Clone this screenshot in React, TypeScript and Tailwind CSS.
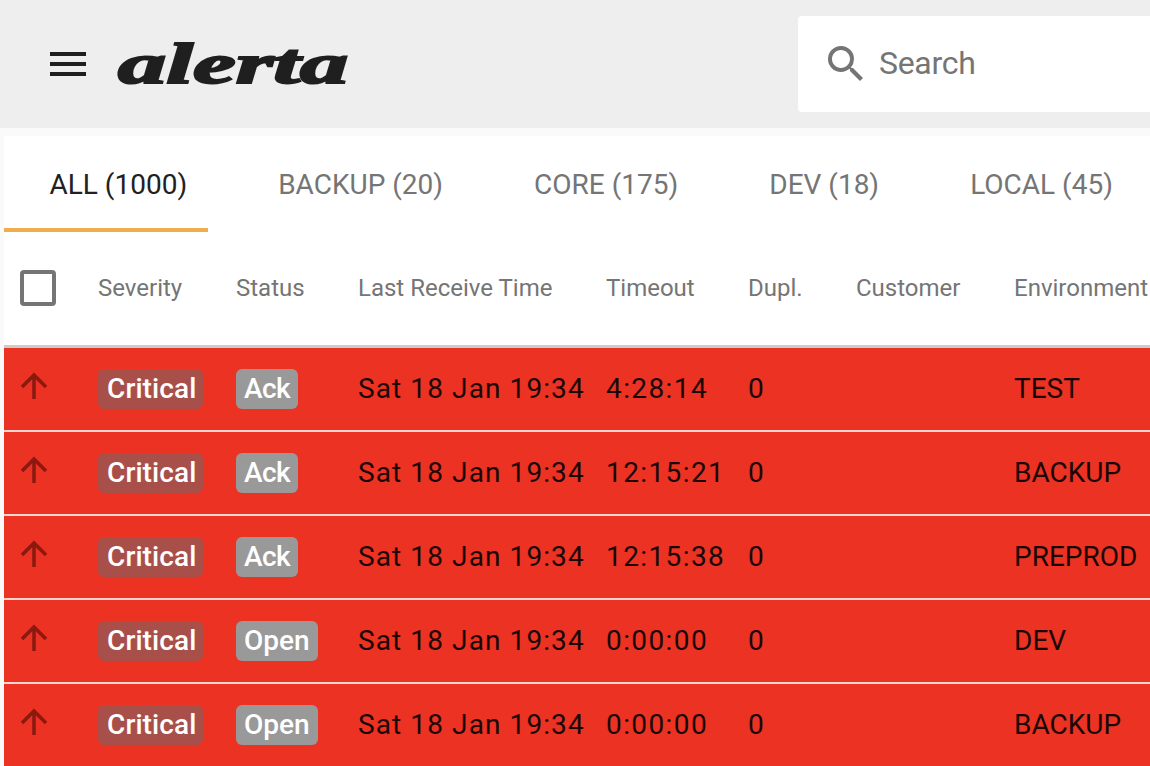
const TABS = ['BACKUP (20)', 'CORE (175)', 'DEV (18)', 'LOCAL (45)'];

const COLUMNS = ['Severity', 'Status', 'Last Receive Time', 'Timeout', 'Dupl.', 'Customer', 'Environment'];

const ALERTS = [
  { status: 'Ack', timeout: '4:28:14', env: 'TEST' },
  { status: 'Ack', timeout: '12:15:21', env: 'BACKUP' },
  { status: 'Ack', timeout: '12:15:38', env: 'PREPROD' },
  { status: 'Open', timeout: '0:00:00', env: 'DEV' },
  { status: 'Open', timeout: '0:00:00', env: 'BACKUP' },
];

const gridCols = 'grid grid-cols-[94px_138px_122px_248px_142px_108px_158px_200px] w-[1210px]';

function ArrowUp() {
  return (
    <svg viewBox="0 0 28 28" className="mb-[6px] h-7 w-7" fill="none" stroke="#8a1a10" strokeWidth="3.5">
      <path d="M14 27V3M2 15L14 3l12 12" />
    </svg>
  );
}

function SearchIcon() {
  return (
    <svg viewBox="0 0 24 24" className="h-12 w-12" fill="#757575">
      <path d="M15.5 14h-.79l-.28-.27A6.471 6.471 0 0 0 16 9.5 6.5 6.5 0 1 0 9.5 16c1.61 0 3.09-.59 4.23-1.57l.27.28v.79l5 4.99L20.49 19l-4.99-5zm-6 0C7.01 14 5 11.99 5 9.5S7.01 5 9.5 5 14 7.01 14 9.5 11.99 14 9.5 14z" />
    </svg>
  );
}

export default function App() {
  return (
    <div className="h-[766px] w-[1150px] overflow-hidden bg-[#fafafa] font-['Roboto',sans-serif]">
      {/* toolbar */}
      <header className="flex h-[128px] items-center bg-[#eeeeee] pl-[50px]">
        <div className="flex w-[36px] flex-col gap-[6px]">
          <span className="h-1 bg-[#1f1f1f]" />
          <span className="h-1 bg-[#1f1f1f]" />
          <span className="h-1 bg-[#1f1f1f]" />
        </div>
        <div className="ml-[32px] w-[230px] origin-left scale-x-[1.72] font-['Liberation_Serif',serif] text-[56px] leading-none font-bold text-[#1f1f1f] italic [-webkit-text-stroke:2px_#1f1f1f]">
          alerta
        </div>
        <div className="ml-[450px] flex h-[96px] flex-1 items-center rounded-l-[4px] bg-white pl-6">
          <SearchIcon />
          <span className="mb-[2px] ml-[9px] text-[32px] tracking-[-0.3px] text-[#757575]">Search</span>
        </div>
      </header>

      <main className="mt-2 ml-1 bg-white">
        {/* tabs */}
        <nav className="relative flex h-[96px] pt-[2px] text-[28px] whitespace-nowrap text-[#757575]">
          <div className="flex items-center px-[45.5px] text-[#212121]">ALL (1000)</div>
          {TABS.map((tab) => (
            <div key={tab} className="flex items-center px-[45.5px]">
              {tab}
            </div>
          ))}
          <span className="absolute bottom-0 left-0 h-1 w-[204px] bg-[#f0ad4e]" />
        </nav>

        {/* table header */}
        <div className={`${gridCols} h-[116px] items-center border-b-[3px] border-[#cccccc] pb-[2px] text-[24px] text-[#757575]`}>
          <div className="pl-4">
            <div className="h-9 w-9 rounded-[4px] border-4 border-[#757575]" />
          </div>
          {COLUMNS.map((col) => (
            <div key={col} className="whitespace-nowrap">
              {col}
            </div>
          ))}
        </div>

        {/* rows */}
        {ALERTS.map((alert, i) => (
          <div
            key={i}
            className={`${gridCols} h-[84px] items-center border-b-2 border-[#f5d5d0] bg-[#eb3223] text-[28px] text-[#1a0705]`}
          >
            <div className="flex pl-4">
              <ArrowUp />
            </div>
            <div>
              <span className="inline-block rounded-[6px] bg-[#a94f4a] py-[2px] pr-[7px] pl-[9px] text-[28px] leading-[36px] font-medium tracking-[0.1px] text-white">
                Critical
              </span>
            </div>
            <div>
              <span
                className={`inline-block rounded-[6px] bg-[#999999] px-2 py-[2px] text-[28px] leading-[36px] font-medium text-white ${
                  alert.status === 'Ack' ? 'tracking-[-0.6px]' : ''
                }`}
              >
                {alert.status}
              </span>
            </div>
            <div className="tracking-[1.1px] whitespace-nowrap">Sat 18 Jan 19:34</div>
            <div className="tracking-[1.4px]">{alert.timeout}</div>
            <div>0</div>
            <div />
            <div>{alert.env}</div>
          </div>
        ))}
      </main>
    </div>
  );
}
